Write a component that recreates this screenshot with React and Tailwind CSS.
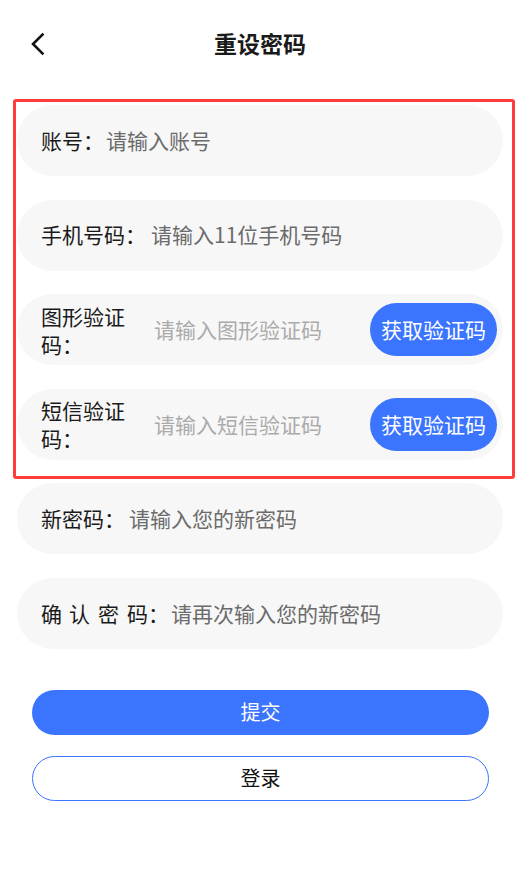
import React from 'react';

// --- Presentation pieces ---

const Row = ({ children }) => (
  <div className="flex h-[71px] items-center rounded-full bg-[#f7f7f7] pl-[24px] pr-[6px]">
    {children}
  </div>
);

const SimpleField = ({ label, placeholder, gap = 'ml-[4px]' }) => (
  <Row>
    <span className="shrink-0 text-[21px] text-[#1a1a1a]">{label}</span>
    <span className={`${gap} text-[21px] text-[#6b6b6b]`}>{placeholder}</span>
  </Row>
);

const CodeField = ({ label, placeholder }) => (
  <Row>
    <span className="w-[92px] shrink-0 text-[21px] leading-[28px] text-[#1a1a1a]">{label}</span>
    <span className="ml-[21px] flex-1 text-[21px] text-[#ababab]">{placeholder}</span>
    <button className="h-[53px] shrink-0 rounded-full bg-[#3b74ff] px-[11px] text-[21px] text-white">
      获取验证码
    </button>
  </Row>
);

const App = () => {
  return (
    <div
      className="min-h-[892px] w-[520px] bg-white"
      style={{ fontFamily: '"Noto Sans CJK SC", "Noto Sans", sans-serif' }}
    >
      {/* Header */}
      <header className="relative flex h-[87px] items-center justify-center">
        <button className="absolute left-[28px] top-[30px] p-[2px]">
          <svg width="16" height="24" viewBox="0 0 16 24" fill="none">
            <path d="M12.5 2.5 L3 12 L12.5 21.5" stroke="#111" strokeWidth="2.6" strokeLinecap="square" />
          </svg>
        </button>
        <h1 className="text-[23px] font-bold text-[#1a1a1a]">重设密码</h1>
      </header>

      <div className="mt-[18px] ml-[17px] w-[486px] flex flex-col gap-[23.6px]">
        {/* Highlighted group */}
        <div className="relative flex flex-col gap-[23.6px]">
          <div className="pointer-events-none absolute -left-[4px] -top-[6px] -right-[12px] -bottom-[19px] rounded-[3px] border-[3.5px] border-[#ff3b3b]" />
          <SimpleField label="账号：" placeholder="请输入账号" gap="ml-[2px]" />
          <SimpleField label="手机号码：" placeholder="请输入11位手机号码" gap="ml-[5px]" />
          <CodeField label="图形验证码：" placeholder="请输入图形验证码" />
          <CodeField label="短信验证码：" placeholder="请输入短信验证码" />
        </div>

        <SimpleField label="新密码：" placeholder="请输入您的新密码" />
        <Row>
          <span className="shrink-0 text-[21px] text-[#1a1a1a]">
            <span className="mr-[7px]">确</span>
            <span className="mr-[8px]">认</span>
            <span className="mr-[8px]">密</span>
            <span>码：</span>
          </span>
          <span className="ml-[2px] text-[21px] text-[#6b6b6b]">请再次输入您的新密码</span>
        </Row>
      </div>

      {/* Actions */}
      <div className="ml-[32px] mr-[31px] mt-[41px] flex flex-col gap-[21px]">
        <button className="h-[45px] rounded-full bg-[#3b74ff] text-[20px] text-white">提交</button>
        <button className="h-[45px] rounded-full border-[1.5px] border-[#3b74ff] bg-white text-[20px] text-[#111]">
          登录
        </button>
      </div>
    </div>
  );
};

export default App;
